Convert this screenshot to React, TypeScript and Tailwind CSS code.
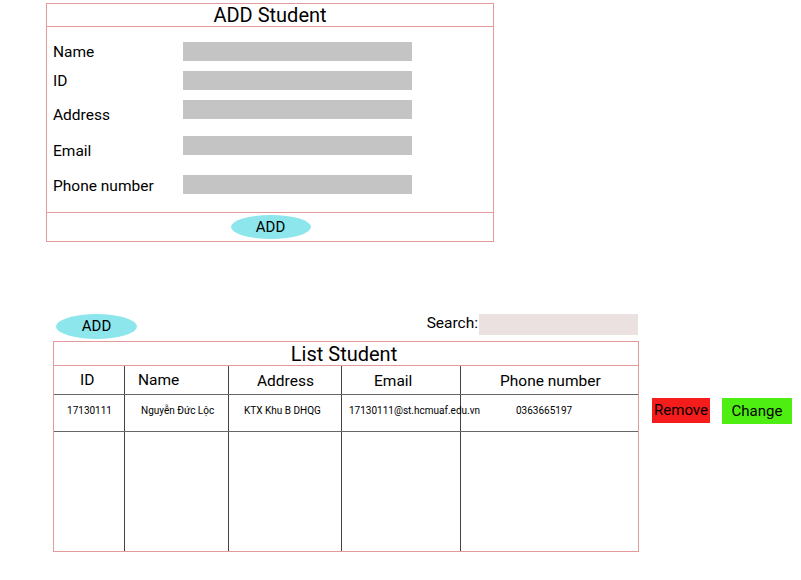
import React from "react";

const font = { fontFamily: "Roboto, 'Liberation Sans', sans-serif" };

function FormRow({ label, top, labelOffset }: { label: string; top: string; labelOffset: string }) {
  return (
    <div className={`flex ${top}`}>
      <div className={`w-[130px] text-[15.5px] leading-[19px] text-black ${labelOffset}`}>{label}</div>
      <div className="w-[229px] h-[19px] bg-[#c4c4c4]" />
    </div>
  );
}

export default function App() {
  const cols = ["w-[71px]", "w-[104px]", "w-[113px]", "w-[119px]", "flex-1"];
  return (
    <div className="w-[801px] h-[580px] bg-white text-black overflow-hidden" style={font}>
      {/* ADD Student form */}
      <div className="ml-[46px] mt-[3px] w-[448px] h-[239px] border border-[#e49a9a] flex flex-col">
        <div className="h-[23px] border-b border-[#e49a9a] flex items-center justify-center text-[20px] leading-[22px]">
          ADD Student
        </div>
        <div className="h-[185px] pl-[6px] flex flex-col">
          <FormRow label="Name" top="mt-[15px]" labelOffset="mt-[1px] -mb-[1px]" />
          <FormRow label="ID" top="mt-[10px]" labelOffset="mt-[1px] -mb-[1px]" />
          <FormRow label="Address" top="mt-[10px]" labelOffset="mt-[6px] -mb-[6px]" />
          <FormRow label="Email" top="mt-[17px]" labelOffset="mt-[6px] -mb-[6px]" />
          <FormRow label="Phone number" top="mt-[20px]" labelOffset="mt-[2px] -mb-[2px]" />
        </div>
        <div className="flex-1 border-t border-[#e49a9a] flex items-center justify-center">
          <div className="ml-[1px] w-[80px] h-[24px] rounded-[50%] bg-[#8de6ec] flex items-center justify-center text-[15px]">
            ADD
          </div>
        </div>
      </div>

      {/* List section */}
      <div className="ml-[53px] mt-[72px] flex">
        <div className="w-[586px] flex flex-col">
          <div className="h-[25px] flex items-center justify-between">
            <div className="ml-[3px] w-[81px] h-[25px] rounded-[50%] bg-[#8de6ec] flex items-center justify-center text-[15px]">
              ADD
            </div>
            <div className="flex items-start h-[25px]">
              <span className="text-[15.5px] leading-[19px] mr-[1px]">Search:</span>
              <div className="w-[159px] h-[21px] bg-[#ebe1e1] mr-[1px]" />
            </div>
          </div>
          <div className="mt-[2px] h-[211px] border border-[#e49a9a] flex flex-col">
            <div className="h-[24px] border-b border-[#e49a9a] flex items-center justify-center text-[20px] leading-[22px] pr-[4px]">
              List Student
            </div>
            <div className="h-[29px] flex border-b border-[#666] text-[15.5px]">
              <div className={`${cols[0]} border-r border-[#444] flex items-center pl-[26px] pt-[1px]`}>ID</div>
              <div className={`${cols[1]} border-r border-[#444] flex items-center pl-[13px] pt-[1px]`}>Name</div>
              <div className={`${cols[2]} border-r border-[#444] flex items-center pl-[28px] pt-[4px]`}>Address</div>
              <div className={`${cols[3]} border-r border-[#444] flex items-center pl-[32px] pt-[3px]`}>Email</div>
              <div className={`${cols[4]} flex items-center pl-[39px] pt-[4px]`}>Phone number</div>
            </div>
            <div className="h-[37px] flex border-b border-[#666] text-[10px]">
              <div className={`${cols[0]} border-r border-[#444] flex items-center justify-center pb-[5px] pl-[1px]`}>17130111</div>
              <div className={`${cols[1]} border-r border-[#444] flex items-center pl-[16px] pb-[5px]`}>Nguyễn Đức Lộc</div>
              <div className={`${cols[2]} border-r border-[#444] flex items-center justify-center pb-[5px] pr-[5px]`}>KTX Khu B DHQG</div>
              <div className={`${cols[3]} border-r border-[#444] flex items-center pl-[7px] pb-[5px] whitespace-nowrap relative z-10 overflow-visible`}>
                <span>17130111@st.hcmuaf.edu.vn</span>
              </div>
              <div className={`${cols[4]} flex items-center pl-[55px] pb-[5px]`}>0363665197</div>
            </div>
            <div className="flex-1 flex">
              <div className={`${cols[0]} border-r border-[#444]`} />
              <div className={`${cols[1]} border-r border-[#444]`} />
              <div className={`${cols[2]} border-r border-[#444]`} />
              <div className={`${cols[3]} border-r border-[#444]`} />
              <div className={cols[4]} />
            </div>
          </div>
        </div>
        <div className="ml-[13px] mt-[84px] flex items-start gap-[12px]">
          <div className="w-[58px] h-[25px] bg-[#f51c1c] flex items-center justify-center text-[15px]">Remove</div>
          <div className="w-[70px] h-[26px] bg-[#4eee12] flex items-center justify-center text-[15px]">Change</div>
        </div>
      </div>
    </div>
  );
}
